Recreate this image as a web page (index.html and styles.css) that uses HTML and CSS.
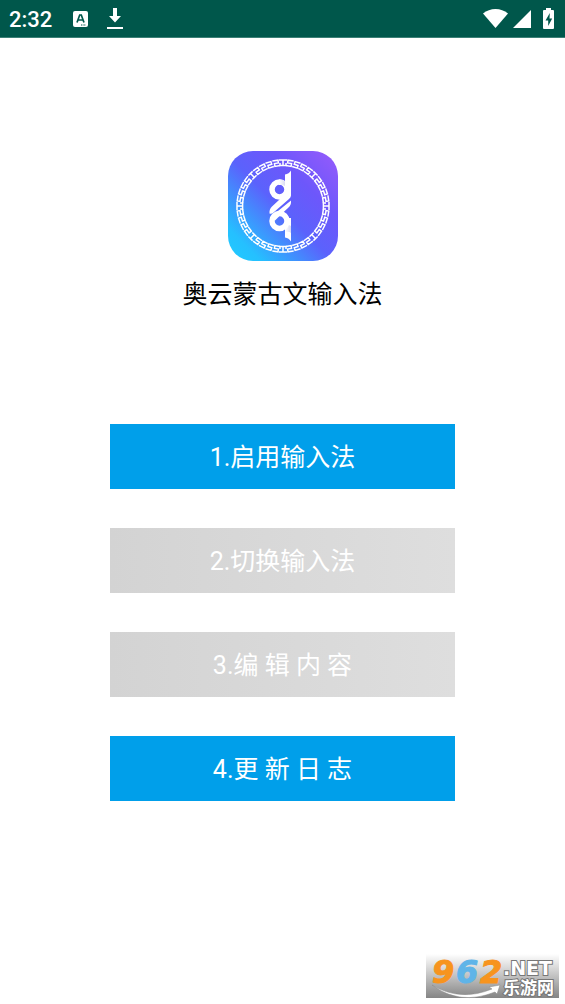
FILE: index.html
```html
<!DOCTYPE html>
<html lang="zh-CN">
<head>
<meta charset="utf-8">
<meta name="viewport" content="width=device-width, initial-scale=1">
<title>奥云蒙古文输入法</title>
<link rel="stylesheet" href="styles.css">
</head>
<body>
<header class="status">
  <div class="status-left">
    <time class="clock">2:32</time>
    <svg class="icon-ime" viewBox="0 0 16 16" aria-hidden="true"><rect width="15" height="16" rx="2" fill="#fff"/><path d="M4 11.500 6.700 4h1.600L11 11.500M5.200 9h4.600" fill="none" stroke="#00574b" stroke-width="1.700"/><path d="M8 14h5" stroke="#00574b" stroke-dasharray="1 .6"/></svg>
    <svg class="icon-download" viewBox="0 0 16 21" aria-hidden="true"><path d="M6 0h4v8h4l-6 6.500L2 8h4zM0 19h16v2H0z" fill="#fff"/></svg>
  </div>
  <div class="status-right">
    <svg class="icon-wifi" viewBox="0 0 25 19" aria-hidden="true"><path d="M12.500 19 0 4.500Q5.500 0 12.500 0T25 4.500z" fill="#fff"/></svg>
    <svg class="icon-signal" viewBox="0 0 18 18" aria-hidden="true"><path d="M18 0v18H0z" fill="#fff"/></svg>
    <svg class="icon-battery" viewBox="0 0 11 21" aria-hidden="true"><path d="M3 0h5v2h2q1 0 1 1v17q0 1-1 1H1q-1 0-1-1V3q0-1 1-1h2z" fill="#fff"/><path d="M6.800 5 2.500 12.500h2.700V18l4-7.500H6.500z" fill="#00574b"/></svg>
  </div>
</header>
<main class="home">
  <svg class="logo" viewBox="0 0 110 110" role="img" aria-label="奥云">
    <defs>
      <linearGradient id="base" x1="0" y1="1" x2="1" y2="0">
        <stop offset="0" stop-color="#20ccff"/><stop offset=".15" stop-color="#25c0ff"/><stop offset=".48" stop-color="#5b62fc"/><stop offset=".7" stop-color="#6d57fb"/><stop offset="1" stop-color="#985bfb"/>
      </linearGradient>
      <linearGradient id="shade" x1="0" y1="0" x2="1" y2="0">
        <stop offset="0" stop-color="#fff"/><stop offset="1" stop-color="#d9dbf2"/>
      </linearGradient>
      <path id="hook" d="M58.500 9H52.800v2.800h4v2.800H51.500"/>
      <g id="octant">
        <use href="#hook" transform="rotate(9 55 55)"/>
        <use href="#hook" transform="rotate(18 55 55)"/>
        <use href="#hook" transform="rotate(27 55 55)"/>
        <use href="#hook" transform="rotate(36 55 55)"/>
      </g>
      <g id="quarter">
        <path d="M51 9h8M55 9v5.600M52 12v2.600h6V12"/>
        <use href="#octant"/>
        <use href="#octant" transform="translate(110 0) scale(-1 1)"/>
        <path d="M52 9h6M55 9v5.600M52 14.600h6" transform="rotate(45 55 55)"/>
      </g>
    </defs>
    <rect width="110" height="110" rx="25" fill="url(#base)"/>
    <g fill="none" stroke="#fff" stroke-width="1.500">
      <use href="#quarter"/>
      <use href="#quarter" transform="rotate(90 55 55)"/>
      <use href="#quarter" transform="rotate(180 55 55)"/>
      <use href="#quarter" transform="rotate(270 55 55)"/>
    </g>
    <g fill="none" stroke="#fff" stroke-width="5.500">
      <circle cx="51.500" cy="38.500" r="7.500"/>
      <circle cx="51.500" cy="70" r="7.500"/>
    </g>
    <path d="M51 28.500q4-.5 6 2V35Q55 33.500 51 34z" fill="url(#shade)"/>
    <path d="M57 23.500Q61 23 63 19.500V44.500Q63 46 61 48L45.500 61.500Q43 63.500 41.500 62.500 41 58.500 44 55.500L51 49 57 43z" fill="#fff"/>
    <path d="M63 49.500Q63.500 54 60 57L53.500 63 47 69.500 42.500 67.500Q43 65.500 45 64z" fill="#fff"/>
    <path d="M57 67h6v23.500Q61 87 57 86.500z" fill="#fff"/>
    <path d="M57 79q3-2 4-5l2 1v7q-2-2-6-1z" fill="url(#shade)"/>
  </svg>
  <h1 class="title">奥云蒙古文输入法</h1>
  <div class="actions">
    <button class="action" type="button">1.启用输入法</button>
    <button class="action" type="button" disabled>2.切换输入法</button>
    <button class="action" type="button" disabled>3.编 辑 内 容</button>
    <button class="action" type="button">4.更 新 日 志</button>
  </div>
</main>
<svg class="watermark" viewBox="0 0 133 44" role="img" aria-label="962.NET 乐游网">
  <defs><linearGradient id="fade" x1="0" y1="0" x2="0" y2="1"><stop offset="0" stop-color="#fff"/><stop offset="1" stop-color="#858585"/></linearGradient></defs>
  <rect width="133" height="44" fill="url(#fade)"/>
  <g class="mark-number"><text x="6" y="29" fill="#f7941e" stroke="#f7941e">9</text><text x="30" y="29" fill="#5fb4e8" stroke="#5fb4e8">6</text><text x="54" y="29" fill="#f7941e" stroke="#f7941e">2</text></g>
  <path d="M6 31Q34 48 66 35l-3-2 11-2-3 9-2-2Q34 52 6 31z" fill="#fff" stroke="#888" stroke-width=".5"/>
  <g class="mark-text"><text x="77" y="21" class="mark-net">.NET</text><text x="77" y="40" class="mark-name">乐游网</text></g>
</svg>
</body>
</html>
```
FILE: styles.css
```css
* { box-sizing: border-box; }

body {
  position: relative;
  display: flex;
  flex-direction: column;
  min-height: 100vh;
  margin: 0;
  background: #fff;
  color: #000;
  font-family: Roboto, "Noto Sans CJK SC", sans-serif;
}

.status {
  display: flex;
  align-items: center;
  justify-content: space-between;
  height: 38px;
  padding: 0 11px 0 9px;
  border-bottom: 1px solid #3c8076;
  background: #00574b;
  color: #fff;
}

.status-left,
.status-right { display: flex; align-items: center; }

.status-right { gap: 5px; }

.clock {
  margin-right: 21px;
  padding-top: 2px;
  font-size: 22px;
  font-weight: 500;
  line-height: 36px;
}

.icon-ime { width: 16px; height: 16px; margin-right: 18px; }
.icon-download { width: 16px; height: 21px; }
.icon-wifi { width: 25px; height: 19px; }
.icon-signal { width: 18px; height: 18px; }
.icon-battery { width: 11px; height: 21px; margin-left: 7px; }

.home {
  display: flex;
  flex-direction: column;
  align-items: center;
  padding: 113px 0 48px;
}

.logo { width: 110px; height: 110px; }

.title {
  margin: 16px 0 0;
  font-size: 25px;
  font-weight: 400;
  line-height: 36px;
}

.actions {
  display: grid;
  gap: 39px;
  width: 61%;
  margin-top: 111px;
}

.action {
  height: 65px;
  padding: 0 0 3px;
  border: 0;
  background: #009fea;
  color: #fff;
  font: inherit;
  font-size: 25px;
}

.action:disabled { background: linear-gradient(90deg, #d3d3d3, #dedede); }

.watermark {
  position: absolute;
  right: 6px;
  bottom: 6px;
  width: 133px;
  height: 44px;
  overflow: visible;
}

.mark-number {
  font: italic 700 32px "DejaVu Sans", sans-serif;
  stroke-width: 1px;
}

.mark-text {
  fill: #fff;
  stroke: #777;
  stroke-width: 2px;
  paint-order: stroke;
}

.mark-net { font: 700 19px "DejaVu Sans", sans-serif; }
.mark-name { font: 700 17px "Liberation Sans", "Noto Sans CJK SC", sans-serif; }
```
